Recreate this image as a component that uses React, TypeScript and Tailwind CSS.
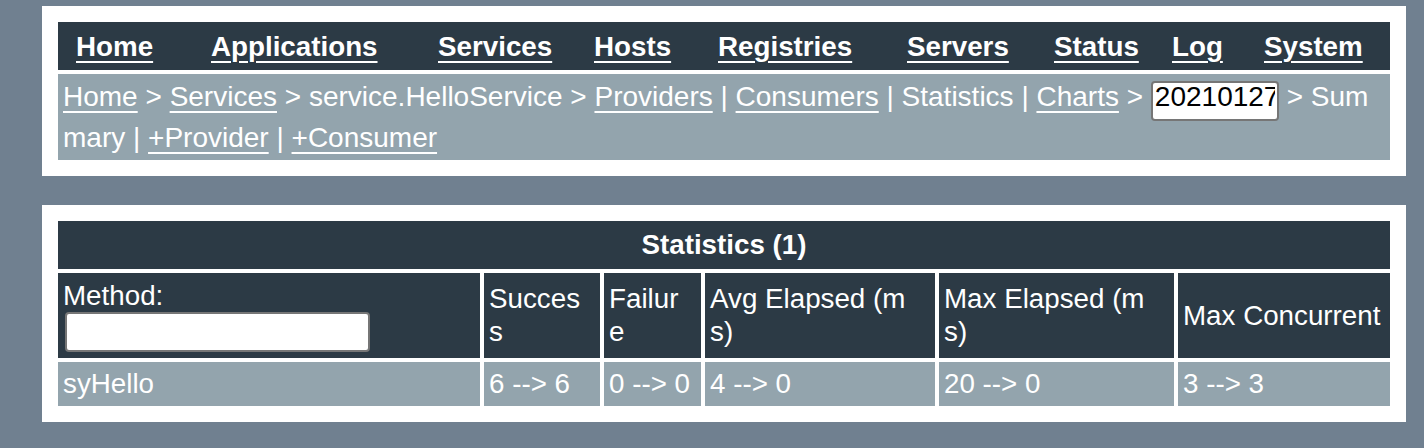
import React from "react";

const navItems = [
  "Home",
  "Applications",
  "Services",
  "Hosts",
  "Registries",
  "Servers",
  "Status",
  "Log",
  "System",
];

type StatRow = {
  method: string;
  success: string;
  failure: string;
  avgElapsed: string;
  maxElapsed: string;
  maxConcurrent: string;
};

const rows: StatRow[] = [
  {
    method: "syHello",
    success: "6 --> 6",
    failure: "0 --> 0",
    avgElapsed: "4 --> 0",
    maxElapsed: "20 --> 0",
    maxConcurrent: "3 --> 3",
  },
];

const link = "underline decoration-[1.5px] underline-offset-[5px]";

function TopPanel() {
  return (
    <div className="flex flex-col gap-1 bg-white p-4">
      <nav className="grid grid-cols-[135px_227px_156px_124px_189px_147px_118px_92px_1fr] bg-[#2c3a45] py-[7.5px] pl-[18px] font-bold">
        {navItems.map((item) => (
          <div key={item}>
            <a href="#" className={link}>
              {item}
            </a>
          </div>
        ))}
      </nav>
      <div className="break-all bg-[#93a4ad] px-[5px] pt-[6px] pb-[6px] text-[28px]">
        <a href="#" className={link}>Home</a> &gt;{" "}
        <a href="#" className={link}>Services</a> &gt; service.HelloService &gt;{" "}
        <a href="#" className={link}>Providers</a> |{" "}
        <a href="#" className={link}>Consumers</a> | Statistics |{" "}
        <a href="#" className={link}>Charts</a> &gt;{" "}
        <input
          type="text"
          defaultValue="20210127"
          className="h-[40px] w-[128px] rounded-[4px] border-2 border-[#767676] bg-white px-[2px] pt-0 pb-[7px] text-black"
        />{" "}
        &gt; Summary | <a href="#" className={link}>+Provider</a> |{" "}
        <a href="#" className={link}>+Consumer</a>
      </div>
    </div>
  );
}

function StatisticsTable() {
  return (
    <div className="mt-[29px] bg-white p-3">
      <table className="w-full table-fixed border-separate border-spacing-1">
        <colgroup>
          <col className="w-[422px]" />
          <col className="w-[116px]" />
          <col className="w-[97px]" />
          <col className="w-[230px]" />
          <col className="w-[235px]" />
          <col />
        </colgroup>
        <thead>
          <tr>
            <th colSpan={6} className="bg-[#2c3a45] py-[7.5px] text-center font-bold">
              Statistics ({rows.length})
            </th>
          </tr>
          <tr className="break-all text-left font-normal">
            <th className="bg-[#2c3a45] px-[5px] py-[6px] text-left font-normal">
              Method:
              <input
                type="text"
                className="ml-[2px] block h-[40px] w-[305px] rounded-[4px] border-2 border-[#767676] bg-white text-black"
              />
            </th>
            <th className="bg-[#2c3a45] pl-[5px] pr-[15px] text-left font-normal">Success</th>
            <th className="bg-[#2c3a45] pl-[5px] pr-[18px] text-left font-normal">Failure</th>
            <th className="bg-[#2c3a45] pl-[5px] pr-[23px] text-left font-normal">Avg Elapsed (ms)</th>
            <th className="bg-[#2c3a45] pl-[5px] pr-[24px] text-left font-normal">Max Elapsed (ms)</th>
            <th className="bg-[#2c3a45] px-[5px] text-left font-normal">Max Concurrent</th>
          </tr>
        </thead>
        <tbody>
          {rows.map((row) => (
            <tr key={row.method} className="bg-[#93a4ad]">
              <td className="px-[5px] py-[5.5px]">{row.method}</td>
              <td className="px-[5px] py-[5.5px]">{row.success}</td>
              <td className="px-[5px] py-[5.5px]">{row.failure}</td>
              <td className="px-[5px] py-[5.5px]">{row.avgElapsed}</td>
              <td className="px-[5px] py-[5.5px]">{row.maxElapsed}</td>
              <td className="px-[5px] py-[5.5px]">{row.maxConcurrent}</td>
            </tr>
          ))}
        </tbody>
      </table>
    </div>
  );
}

export default function App() {
  return (
    <div className="min-h-screen bg-[#708090] pt-[6px] pr-[18px] pb-8 pl-[42px] font-['Liberation_Sans',Arial,sans-serif] text-[27.75px] leading-[33px] text-white">
      <TopPanel />
      <StatisticsTable />
    </div>
  );
}
